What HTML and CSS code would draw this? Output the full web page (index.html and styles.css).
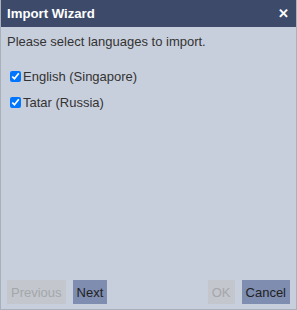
FILE: index.html
```html
<!DOCTYPE html>
<html lang="en">
<head>
    <meta charset="UTF-8">
    <title>Import Wizard</title>
    <link rel="stylesheet" href="styles.css">
</head>
<body>

<!-- Import Wizard dialog -->
<div class="dialog">
    <div class="titlebar">
        <span class="title">Import Wizard</span>
        <span class="close">&#x2715;</span>
    </div>
    <div class="content">
        <p class="intro">Please select languages to import.</p>
        <label class="lang"><input type="checkbox" checked>English (Singapore)</label>
        <label class="lang"><input type="checkbox" checked>Tatar (Russia)</label>
    </div>
    <div class="footer">
        <button class="btn" disabled>Previous</button>
        <button class="btn primary">Next</button>
        <span class="spacer"></span>
        <button class="btn" disabled>OK</button>
        <button class="btn primary">Cancel</button>
    </div>
</div>

</body>
</html>
```

FILE: styles.css
```css
html, body {
    margin: 0;
    height: 100%;
}

body {
    font-family: Arial, "Liberation Sans", sans-serif;
}

.dialog {
    box-sizing: border-box;
    height: 310px;
    width: 297px;
    display: flex;
    flex-direction: column;
    background-color: #c8cfdc;
    border: 1px solid #a9b0bc;
    border-top: none;
}

.titlebar {
    display: flex;
    align-items: center;
    height: 27px;
    padding: 0 7px 0 6px;
    background-color: #3d4a6a;
    color: #fff;
}

.title {
    flex: 1;
    font-size: 13.2px;
    font-weight: bold;
}

.close {
    font-size: 13px;
    font-weight: bold;
}

.content {
    flex: 1;
    padding: 7px 6px;
}

.intro {
    margin: 0 0 14px 0;
    font-size: 13px;
    color: #333;
}

.lang {
    display: flex;
    align-items: center;
    height: 26px;
    font-size: 13px;
    color: #333;
}

.lang input {
    width: 11px;
    height: 11px;
    margin: 0 2px 0 3px;
}

.footer {
    display: flex;
    gap: 7px;
    padding: 0 6px 5px 6px;
}

.spacer {
    flex: 1;
}

.btn {
    height: 24px;
    padding: 0 4px;
    border: none;
    font-family: inherit;
    font-size: 13px;
    color: #222;
    background-color: #7e8db0;
}

.btn:disabled {
    color: #a3a6ab;
    background-color: #c3c7cd;
}
```
